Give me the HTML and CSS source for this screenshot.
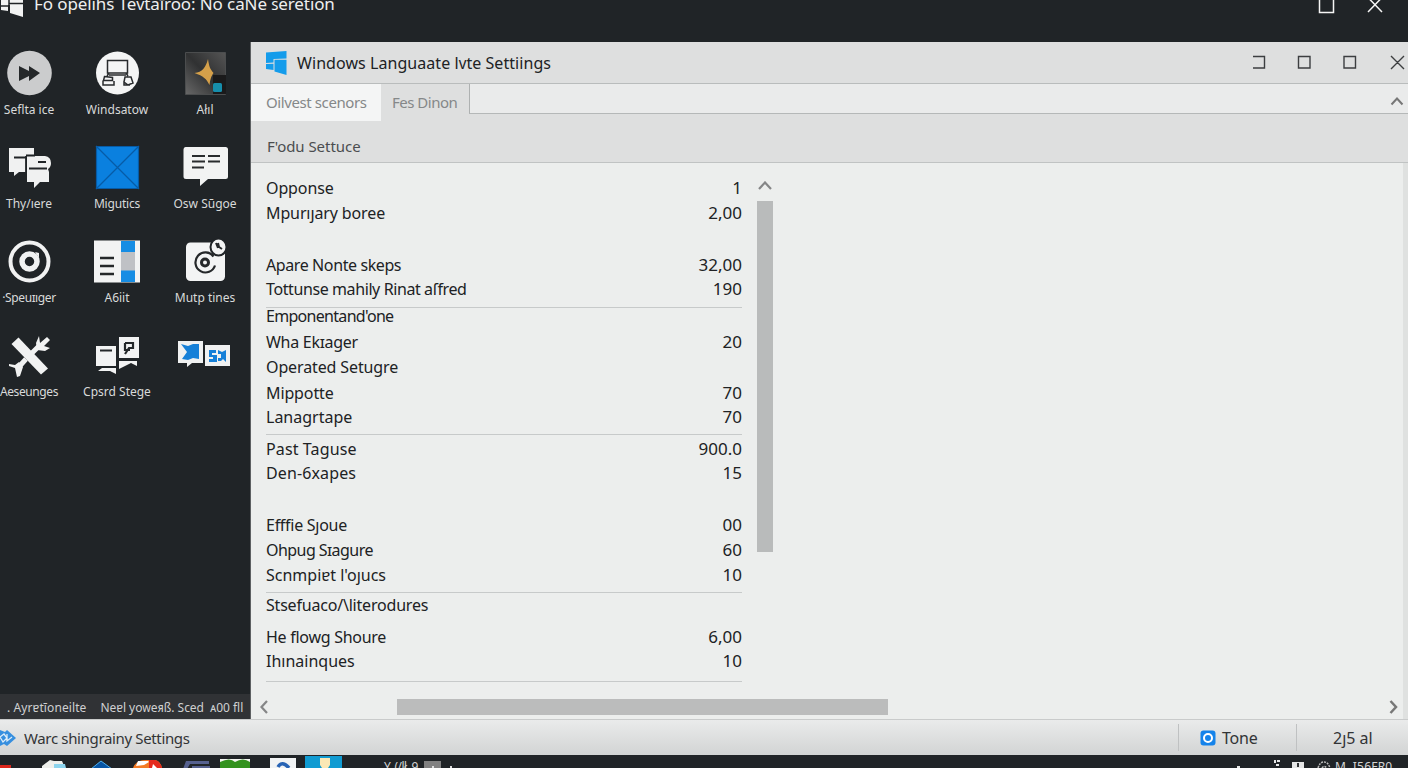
FILE: index.html
```html
<!DOCTYPE html>
<html lang="en">

<head>
    <meta charset="UTF-8" />
    <meta name="viewport" content="width=device-width, initial-scale=1.0" />
    <title>Windows Settings</title>
    <link rel="stylesheet" href="styles.css">
</head>

<body>
    <header class="topbar">
        <svg class="top_logo" width="24" height="18" viewBox="0 0 24 18">
            <path fill="#f2f3f3" d="M1 0h7v11l-7-1zM10 0h13v17l-13-4V5H8V0z" />
            <path stroke="#202427" stroke-width="1.5" d="M0 6h9M9 0v14M9 3.500h14" />
        </svg>
        <span class="top_title">Fo opeliɦs Teᴠtaīroo: No caNe ꜱeretion</span>
        <svg class="top_btns" width="66" height="14" viewBox="0 0 66 14">
            <path fill="none" stroke="#f5f5f5" stroke-width="1.5" d="M1.500 -2v14.500h14V-2M50 -2.500l14 14.500M64 -2.500L50 12" />
        </svg>
    </header>

    <main>
        <aside>
            <ul class="apps">
                <li class="app">
                    <svg viewBox="0 0 56 48"><circle cx="28.500" cy="24" r="22.300" fill="#cbcccd" /><path fill="#25282a" d="M18 17l10 5v-5l11 7-11 8v-5l-10 5z" /></svg>
                    <span class="w1">Seflta ice</span>
                </li>
                <li class="app">
                    <svg viewBox="0 0 56 48"><circle cx="28.500" cy="24" r="21.500" fill="#f4f5f5" /><g fill="none" stroke="#282b2d" stroke-width="1.500"><path d="M18.500 11.500h20v12.500h-20zM20 26h17M20 24l-2 3M37 24l2 3M15.500 27.500l8 1v3h-9zM14 31.500v4.500h11v-4M36 28h6l2 6-5 2-4-3zM35 32v4h6" /></g></svg>
                    <span class="w2">Windsatow</span>
                </li>
                <li class="app">
                    <svg viewBox="0 0 56 48">
                        <defs><linearGradient id="dusk" x1="1" y1="0" x2="0" y2="1"><stop offset="0" stop-color="#555" /><stop offset=".5" stop-color="#303132" /><stop offset="1" stop-color="#686868" /></linearGradient></defs>
                        <path fill="url(#dusk)" stroke="#4b4d4e" d="M8.500 3.500h40v42h-40z" /><path fill="#1a1a1b" d="M36 26h13v19H36z" />
                        <path fill="#d5a04a" d="M31 10c1 7 2 10 5.500 14-2 3-3 5-4 12-3-6-6-9-15-12 8-1 11-5 13.500-14z" /><rect x="36" y="34" width="9" height="9" rx="1.500" fill="#168eac" />
                    </svg>
                    <span class="w3">Ałıl</span>
                </li>
                <li class="app">
                    <svg viewBox="0 0 56 48"><g fill="#f0f1f1"><path d="M8 3h25v7H25v17h-7l-5 4v-4H8z" /><path d="M26 11h18q6 1 6 7 0 4-3 6l1 3v10H39l-6 6v-6h-7z" /></g><path fill="none" stroke="#202427" stroke-width="1.800" d="M13 12.500h13M25 10.500h9M25 11v16M37 17h8M28 23.500h18" /></svg>
                    <span class="w4">Thy/ıere</span>
                </li>
                <li class="app">
                    <svg viewBox="0 0 56 48"><path fill="#0a80df" d="M7 1h43v43H7z" /><path fill="none" stroke="#075ba6" stroke-width="1.200" d="M7.500 1.500h42v42h-42zM7 1l43 43M50 1L7 44" /></svg>
                    <span class="w5">Migutics</span>
                </li>
                <li class="app">
                    <svg viewBox="0 0 56 48"><path fill="#f2f3f3" d="M8.500 2h40q2.500 0 2.500 2.500v27q0 2.500-2.500 2.500H31l-8 7v-7H9q-2.500 0-2.500-2.500v-27Q6.500 2 8.500 2z" /><path stroke="#292c2e" stroke-width="2.200" d="M15 11h13M31 11h12M15 16.500h13M31 16.500h12M15 22.500h12" /></svg>
                    <span class="w6">Osw Sūgoe</span>
                </li>
                <li class="app">
                    <svg viewBox="0 0 56 48"><g fill="none" stroke="#f1f2f2"><circle cx="28.500" cy="21.500" r="19" stroke-width="4" /><circle cx="28.500" cy="21.500" r="7.500" stroke-width="5.500" /></g><path fill="#f1f2f2" d="M34 12l4 1v5z" /></svg>
                    <span class="w7">·Speuɪıger</span>
                </li>
                <li class="app">
                    <svg viewBox="0 0 56 48"><path fill="#f2f3f3" d="M5 .500h46v42H5z" /><path fill="#168de4" d="M32 1h14v41H32z" /><path fill="#bfc1c5" d="M32 12h14v18.500H32z" /><path stroke="#24282a" stroke-width="2.500" d="M11 18h14M11 26h14M11 34h14" /></svg>
                    <span class="w8">A6iit</span>
                </li>
                <li class="app">
                    <svg viewBox="0 0 56 48"><rect x="9" y="2.500" width="39" height="38.500" rx="4.500" fill="#f3f4f4" /><g fill="none" stroke="#25282a"><path stroke-width="2.200" d="M36.500 16.500a10 10 0 1 0 1.500 9" /><circle cx="28" cy="22.500" r="3.500" stroke-width="3" /></g><ellipse cx="41.500" cy="7" rx="8" ry="8.500" fill="#f3f4f4" stroke="#202427" stroke-width="2" /><path fill="none" stroke="#25282a" stroke-width="2" d="M39 3l2 5M41 3l1 4 3 2" /></svg>
                    <span class="w9">Mutp tines</span>
                </li>
                <li class="app">
                    <svg viewBox="0 0 56 48"><path fill="#f1f2f2" d="M10.500 8l7-6.500L47 32.500l-7 6z" /><path fill="none" stroke="#f1f2f2" stroke-width="5" d="M16 33l9-10M31 17l9-9" /><path fill="#f1f2f2" d="M38 0l-3 7 1 7 8 1 5-3-6-2 6-6-3-3-7 6zM8 28l6 1 4-3 4 5-3 9-3 1-2-9-6-2z" /></svg>
                    <span class="w10">Aeseunges</span>
                </li>
                <li class="app">
                    <svg viewBox="0 0 56 48"><path fill="#f2f3f3" d="M7 10h20v20H7zM30 1h20v21H30zM9 35l4-3h14v6l-6-3zM30 25h18v5l-6-3-12 6z" /><path fill="none" stroke="#24282a" stroke-width="2.200" d="M11 14.500h12M36 7v7h5M36 7h8v5h-4l-4 6" /></svg>
                    <span class="w11">Cpsrd Stege</span>
                </li>
                <li class="app">
                    <svg viewBox="0 0 56 48"><path fill="#f0f1f1" d="M1 5h25v22H15l-5 4v-4H1zM28 9h25v21H28z" /><path fill="#1680d8" d="M4 8l7 2 5-2h6v15l-6-1-5 2-6-1 5-7zM32 14h7v3h-4v2h5v7h-8v-3h4v-2h-4zM41 14l4 2 4-2v12l-3-3-2 2h-3v-3h3v-4h-3z" /></svg>
                </li>
            </ul>
            <div class="side_note"><span class="note_a">. Ayrɐtīoneilte</span><span class="note_b">Neɐl yoᴡeᴙß. Sced &nbsp;ᴀ00 fll</span></div>
        </aside>

        <section class="window">
            <div class="titlebar">
                <svg width="21" height="24" viewBox="0 0 21 24"><path fill="#149ceb" d="M0 1.500L20.500 0v7.500L7.500 8v3.500L0 12zM8.500 8.800h12V24L8.500 20.500zM0 13l7.500-.3V19L0 18z" /></svg>
                <h1>Windows Languaate lᴠte Settiings</h1>
                <svg width="156" height="16" viewBox="0 0 156 16"><path fill="none" stroke="#3c3e40" stroke-width="1.400" d="M1 1.500h11.500v11.500H1M46.500 1.500h11.500v11.500H46.500zM92 1.500h11.500v11.500H92zM139 1l13 13M152 1L139 14" /></svg>
            </div>
            <div class="tabs">
                <div class="tab active"><span>Oilvest scenors</span></div>
                <div class="tab"><span>Fes Dinon</span></div>
                <div class="tab_rest">
                    <svg width="14" height="9" viewBox="0 0 14 9"><path fill="none" stroke="#777" stroke-width="2" d="M1.500 7.500l5.500-6 5.500 6" /></svg>
                </div>
            </div>
            <div class="subhead"><span>F'odu Settuce</span></div>

            <div class="content">
                <div class="pane">
                    <div class="list">
                        <div class="group">
                            <div class="row"><span class="r1">Opponse</span><b>1</b></div>
                            <div class="row"><span class="r2">Mpurıȷary boree</span><b>2,00</b></div>
                            <div class="row apart"><span class="r3">Apare Nonte skeps</span><b>32,00</b></div>
                            <div class="row tight"><span class="r4">Tottunse mahily Rinat aſfred</span><b>190</b></div>
                        </div>
                        <div class="group g2">
                            <div class="row"><span class="r5">Emponentand'one</span></div>
                            <div class="row loose"><span class="r6">Wha Ekɪager</span><b>20</b></div>
                            <div class="row"><span class="r7">Operated Setugre</span></div>
                            <div class="row loose"><span class="r8">Mippotte</span><b>70</b></div>
                            <div class="row tight"><span class="r9">Lanagrtape</span><b>70</b></div>
                        </div>
                        <div class="group g3">
                            <div class="row"><span class="r10">Past Taguse</span><b>900.0</b></div>
                            <div class="row tight"><span class="r11">Den-6xapes</span><b>15</b></div>
                            <div class="row apart"><span class="r12">Efffie Sȷoue</span><b>00</b></div>
                            <div class="row"><span class="r13">Ohpug Sɪagure</span><b>60</b></div>
                            <div class="row"><span class="r14">Scnmpiɐt l'oȷucs</span><b>10</b></div>
                        </div>
                        <div class="group g4">
                            <div class="row"><span class="r15">Stsefuaco/\literodures</span></div>
                            <div class="row after_head"><span class="r16">He flowg Shoure</span><b>6,00</b></div>
                            <div class="row tight"><span class="r17">Ihınainques</span><b>10</b></div>
                        </div>
                    </div>
                    <div class="vscroll">
                        <svg width="14" height="9" viewBox="0 0 14 9"><path fill="none" stroke="#858687" stroke-width="2.200" d="M1 8l6-6.500L13 8" /></svg>
                        <div class="vthumb"></div>
                    </div>
                </div>
                <div class="hscroll">
                    <svg width="8" height="14" viewBox="0 0 8 14"><path fill="none" stroke="#858687" stroke-width="2.200" d="M7 1L1.500 7 7 13" /></svg>
                    <div class="hthumb"></div>
                    <svg class="next" width="9" height="14" viewBox="0 0 9 14"><path fill="none" stroke="#777" stroke-width="2.500" d="M1.500 1l5.500 6-5.500 6" /></svg>
                </div>
            </div>
        </section>
    </main>

    <div class="statusbar">
        <svg width="16" height="18" viewBox="0 0 16 18"><path fill="#368fdf" d="M0 1l5 2 2-2 9 8-9 8-3-2-4 2z" /><path fill="none" stroke="#dcecf8" stroke-width="1.300" d="M0 8l4-3 3 4-4 4zM7 5v7l5-4" /></svg>
        <span class="status_title">Warc shingrainy Settings</span>
        <div class="tone">
            <svg width="16" height="16" viewBox="0 0 16 16"><rect x=".500" y=".500" width="15" height="15" rx="3" fill="#1583ea" /><circle cx="8" cy="8" r="4" fill="#1583ea" stroke="#fff" stroke-width="2" /></svg>
            <span>Tone</span>
        </div>
        <div class="count"><span>2ȷ5 al</span></div>
    </div>

    <footer>
        <svg class="task_icons" width="345" height="13" viewBox="0 0 345 13">
            <path fill="#dc271c" d="M0 10h11v3H0z" />
            <path fill="#eff0ec" d="M42 11l8-6 4 1h8l3 7H42z" /><path fill="#8cd4ed" d="M54 9h11l1 4H54z" />
            <path fill="#0755a4" stroke="#4eb0ef" d="M91 14l10-8 11 8z" />
            <path fill="#f37b24" d="M133 13q3-8 12-8h9q6 0 8 8z" /><path fill="#e52a1d" d="M149 5h6q5 1 7 8h-13z" /><path fill="#fff" d="M138 6h10l1 1-5 3-8 1zM153 9l4 4h-5z" />
            <path fill="#56618f" d="M186 6h23v3h-19l-3 5h-4zM192 11h18v2h-18z" />
            <path fill="#f3f5f0" d="M220 4h30v9h-30z" /><path fill="#33921e" d="M220 7q10-5 15 0 8-5 15 0v6h-30z" />
            <path fill="#f1f3f4" d="M270 3h26v10h-26z" /><path fill="none" stroke="#2864b5" stroke-width="3.500" d="M278 12q4-7 11 1" />
            <path fill="#109bd2" d="M305 1h37v12h-37z" /><path fill="#fae8b5" d="M320 3h10v7l-2 3h-6l-2-3z" />
        </svg>
        <span class="task_text">Y. (/lł .9.</span>
        <svg class="task_chip" width="32" height="13" viewBox="0 0 32 13"><path fill="#818181" d="M0 6h17v7H0z" /><path fill="#ddd" d="M26 11h2v2h-2zM8 11h2v2H8z" /></svg>
        <svg class="tray" width="98" height="13" viewBox="0 0 98 13"><path fill="#e5e6e6" d="M0 11h3v2H0zM37 5h2v3h-2zM40 5h3v2h-3zM39 9h3v2h-3zM55 7h12v6H55z" /><path fill="#303335" d="M60 8h2v4h-2z" /><path fill="none" stroke="#bbb" stroke-width="1.500" stroke-dasharray="2 1" d="M81 13q2-6 6-6t6 6M85 13q2-3 5 0" /></svg>
        <span class="clock">M. I56FR0</span>
    </footer>
</body>

</html>
```

FILE: styles.css
```css
html,
body {
    height: 100%;
    margin: 0;
}

body {
    display: flex;
    flex-direction: column;
    overflow: hidden;
    background: #202427;
    color: #202224;
    font-family: "Noto Sans", "Open Sans", sans-serif;
    font-size: 16px;
}

svg {
    display: block;
    flex: none;
}

span,
h1 {
    white-space: nowrap;
}

.topbar {
    flex: none;
    height: 42px;
    display: flex;
    align-items: flex-start;
    color: #eeefef;
}

.top_title {
    margin-left: 10px;
    margin-top: -8px;
    font-size: 17px;
    line-height: 24px;
    letter-spacing: -0.1px;
}

.top_btns {
    margin-left: auto;
    margin-right: 24px;
}

main {
    flex: none;
    height: 677px;
    display: flex;
}

/* 左侧图标 */
aside {
    width: 250px;
    flex: none;
    display: flex;
    flex-direction: column;
    justify-content: space-between;
    overflow: hidden;
    border-right: 1px solid #5d6062;
}

.apps {
    display: grid;
    grid-template-columns: repeat(3, 88px);
    grid-auto-rows: 94px;
    list-style: none;
    margin: 7px 0 0 -15px;
    padding: 0;
}

.app {
    display: flex;
    flex-direction: column;
    align-items: center;
    color: #d8dada;
    font-size: 12px;
}

.app svg {
    width: 56px;
    height: 48px;
    overflow: visible;
}

.app span {
    margin-top: 5px;
    line-height: 16px;
}

.app:nth-child(n+4) svg {
    margin: 2px 0 -2px;
}

.app:nth-child(n+7) svg {
    margin: 3px 0 -3px;
}

.app:nth-child(n+10) svg {
    margin: 5px 0 -5px;
}

.app .w5 {
    letter-spacing: -0.2px;
}

.app .w7,
.app .w10 {
    letter-spacing: -0.4px;
}

.side_note {
    height: 25px;
    display: flex;
    align-items: center;
    background: #303235;
    color: #cfd0d1;
    font-size: 12px;
    padding-left: 7px;
    padding-top: 2px;
    box-sizing: border-box;
}

.note_a {
    letter-spacing: 0.1px;
}

.note_b {
    margin-left: 14px;
    letter-spacing: -0.05px;
}

/* 设置窗口 */
.window {
    flex: 1;
    min-width: 0;
    display: flex;
    flex-direction: column;
    background: #dedfdf;
}

.titlebar {
    height: 41px;
    display: flex;
    align-items: center;
    padding-left: 15px;
    border-bottom: 1px solid #b9bcbc;
}

.titlebar h1 {
    margin: 0 auto 0 10px;
    font-size: 16px;
    font-weight: 400;
    line-height: 22px;
    letter-spacing: 0.06px;
}

.tabs {
    display: flex;
    height: 30px;
    color: #858889;
}

.tab {
    width: 88px;
    box-sizing: border-box;
    padding: 7px 0 0 11px;
    font-size: 15px;
    line-height: 22px;
    letter-spacing: -0.5px;
}

.tab.active {
    width: 130px;
    height: 37px;
    padding-left: 15px;
    background: #f4f5f5;
    letter-spacing: -0.4px;
}

.tab_rest {
    flex: 1;
    display: flex;
    align-items: center;
    justify-content: flex-end;
    padding: 5px 4px 0 0;
    background: #eaebeb;
    border-left: 1px solid #aeb1b1;
    border-bottom: 1px solid #b5b8b8;
    box-sizing: border-box;
}

.subhead {
    height: 49px;
    border-bottom: 1px solid #c0c3c3;
    padding: 22px 0 0 16px;
    box-sizing: border-box;
    color: #4b4d4f;
    font-size: 15px;
    line-height: 20px;
    letter-spacing: -0.05px;
}

.content {
    flex: 1;
    display: flex;
    flex-direction: column;
    background: #eceeed;
    border-right: 5px solid #dfe1e0;
}

.pane {
    flex: 1;
    display: flex;
    padding-left: 15px;
}

.list {
    width: 476px;
    padding-top: 17px;
}

.group {
    padding-bottom: 10px;
    border-bottom: 1px solid #c7caca;
}

.row {
    height: 16px;
    display: flex;
    justify-content: space-between;
    line-height: 16px;
    margin-top: 9px;
}

.row:first-child {
    margin-top: 0;
}

.row b {
    font-size: 17px;
    font-weight: 400;
}

.row.tight {
    margin-top: 8px;
}

.row.loose {
    margin-top: 10px;
}

.row.apart {
    margin-top: 36px;
}

.row.after_head {
    margin-top: 16px;
}

.g2,
.g3 {
    padding-bottom: 9px;
}

.g3 {
    padding-top: 6px;
}

.g4 {
    padding-top: 4px;
    padding-bottom: 12px;
}

.r1,
.r2,
.r7,
.r8 {
    letter-spacing: -0.12px;
}

.r3,
.r4 {
    letter-spacing: -0.4px;
}

.r5 {
    letter-spacing: -0.7px;
}

.r6,
.r12,
.r16 {
    letter-spacing: -0.27px;
}

.r10,
.r11 {
    letter-spacing: 0.12px;
}

.r13 {
    letter-spacing: -0.55px;
}

.r15 {
    letter-spacing: -0.2px;
}

.vscroll {
    width: 16px;
    margin-left: 15px;
    padding-top: 18px;
    display: flex;
    flex-direction: column;
    align-items: center;
}

.vthumb {
    width: 16px;
    height: 351px;
    margin-top: 11px;
    background: #b9bbbb;
}

.hscroll {
    height: 24px;
    display: flex;
    align-items: center;
    padding: 0 5px 0 9px;
}

.hthumb {
    width: 491px;
    height: 16px;
    margin-left: 129px;
    background: #bbbcbc;
}

.next {
    margin-left: auto;
}

/* 状态栏 */
.statusbar {
    flex: none;
    height: 36px;
    display: flex;
    align-items: center;
    box-sizing: border-box;
    border-top: 1px solid #c9cbcb;
    background: linear-gradient(#eaebeb, #d2d4d4);
    color: #323436;
}

.status_title {
    margin-left: 8px;
    font-size: 15px;
    letter-spacing: -0.35px;
}

.tone,
.count {
    height: 27px;
    display: flex;
    align-items: center;
    box-sizing: border-box;
    border-left: 1px solid #bfc1c2;
}

.tone {
    width: 118px;
    margin-left: auto;
    padding-left: 21px;
    gap: 6px;
    letter-spacing: -0.2px;
}

.count {
    width: 112px;
    padding-left: 36px;
}

footer {
    flex: none;
    height: 13px;
    display: flex;
    overflow: hidden;
    color: #d4d5d5;
    font-size: 12px;
    line-height: 20px;
}

.task_text {
    width: 36px;
    margin-left: 39px;
    margin-top: 2px;
    letter-spacing: -0.6px;
}

.task_chip {
    margin-left: 4px;
}

.tray {
    margin-left: auto;
}

.clock {
    width: 73px;
    margin-top: 2px;
    letter-spacing: 0.2px;
}
```
